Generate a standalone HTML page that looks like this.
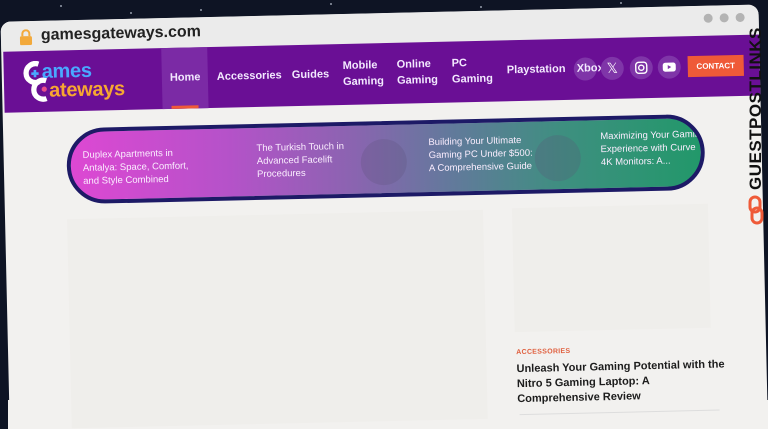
<!DOCTYPE html>
<html><head><meta charset="utf-8"><style>
*{margin:0;padding:0;box-sizing:border-box}
html,body{width:768px;height:429px;overflow:hidden}
body{background:#0e1424;font-family:"Liberation Sans",sans-serif;position:relative}
#clip{position:absolute;left:0;top:0;width:768px;height:429px;overflow:hidden;clip-path:inset(0 0 0 0)}
.star{position:absolute;width:2px;height:2px;background:#cfd6e6;border-radius:50%;opacity:.7}
#win{position:absolute;left:5px;top:13px;width:758px;height:408px;background:#f2f1ef;border-radius:10px 10px 0 0;transform:rotate(-1.3deg);transform-origin:384px 200px;overflow:hidden}
#under{position:absolute;left:8px;top:400px;width:760px;height:29px;background:#f2f1ef}
.bar{position:absolute;left:0;top:0;width:760px;height:30px;background:#ebebeb}
.url{position:absolute;left:40px;top:6px;font-size:16px;font-weight:bold;color:#222}
.lock{position:absolute;left:18px;top:8px;width:14px;height:16px}
.dot{position:absolute;top:8px;width:9px;height:9px;border-radius:50%;background:#b3b3b3}
.hdr{position:absolute;left:2px;top:30px;width:760px;height:61px;background:#6a0f95}
.nav{position:absolute;color:#f3e9ff;font-weight:bold;font-size:11px;line-height:16px}
.ic{position:absolute;top:19px;width:23px;height:23px;border-radius:50%;background:#7f35a8}
.pill{position:absolute;left:63px;top:108px;width:638px;height:76px;border-radius:38px;border:4px solid #1d1a66;background:linear-gradient(90deg,#dd48d3 0%,#b552c9 25%,#8a64b0 45%,#63799c 60%,#3e8f80 78%,#22986a 100%);overflow:hidden}
.pt{position:absolute;color:#fbeeff;font-size:9.5px;line-height:13px}
.circ{position:absolute;top:14px;width:46px;height:46px;border-radius:50%;background:rgba(90,80,120,.25)}
</style></head><body>
<div id="clip">
<div class="star" style="left:60px;top:5px"></div><div class="star" style="left:200px;top:9px"></div><div class="star" style="left:330px;top:3px"></div><div class="star" style="left:480px;top:6px"></div><div class="star" style="left:620px;top:2px"></div><div class="star" style="left:130px;top:12px"></div>
<div id="under"></div>
<div id="win">
 <div class="bar"></div>
 <svg class="lock" viewBox="0 0 14 16"><path d="M3.5 7V4.5a3.5 3.5 0 0 1 7 0V7" stroke="#f2a93b" stroke-width="2" fill="none"/><rect x="1" y="7" width="12" height="9" rx="1.5" fill="#f2a93b"/></svg>
 <div class="url">gamesgateways.com</div>
 <div class="dot" style="left:703px"></div><div class="dot" style="left:719px"></div><div class="dot" style="left:735px"></div>
 <div class="hdr">
  <div style="position:absolute;left:158px;top:0;width:46px;height:61px;background:#7b2aa5"></div>
  <div style="position:absolute;left:167px;top:58px;width:27px;height:3px;background:#ef5a38"></div>
  <svg style="position:absolute;left:19px;top:10px" width="36" height="42" viewBox="0 0 34 40"><path d="M15 3a9 9 0 1 0 0 17" stroke="#fff" stroke-width="5" fill="none"/><path d="M22 19a9 9 0 1 0 0 17" stroke="#fff" stroke-width="5" fill="none"/><path d="M8 12h7M11.5 8.5v7" stroke="#4aa8ff" stroke-width="2.5"/><circle cx="20" cy="27" r="2.5" fill="#e84c8a"/></svg>
  <div style="position:absolute;left:38px;top:10px;font-size:20px;font-weight:bold;color:#4aa8ff;letter-spacing:-.3px">ames</div>
  <div style="position:absolute;left:45px;top:29px;font-size:20px;font-weight:bold;color:#f7a731;letter-spacing:-.3px">ateways</div>
  <div class="nav" style="left:166px;top:22px">Home</div>
  <div class="nav" style="left:213px;top:22px">Accessories</div>
  <div class="nav" style="left:288px;top:22px">Guides</div>
  <div class="nav" style="left:339px;top:14px">Mobile<br>Gaming</div>
  <div class="nav" style="left:393px;top:14px">Online<br>Gaming</div>
  <div class="nav" style="left:448px;top:14px">PC<br>Gaming</div>
  <div class="nav" style="left:503px;top:22px">Playstation</div>
  <div class="ic" style="left:570px"></div>
  <div class="nav" style="left:573px;top:22px">Xbox</div>
  <div class="ic" style="left:597px;color:#fff;font-size:14px;text-align:center;line-height:23px">𝕏</div>
  <div class="ic" style="left:626px"><svg width="23" height="23"><rect x="6" y="6" width="11" height="11" rx="3" stroke="#fff" stroke-width="1.4" fill="none"/><circle cx="11.5" cy="11.5" r="2.6" stroke="#fff" stroke-width="1.4" fill="none"/></svg></div>
  <div class="ic" style="left:654px"><svg width="23" height="23"><rect x="5" y="7" width="13" height="9" rx="2.5" fill="#fff"/><path d="M10 9.5v4l3.5-2z" fill="#7f35a8"/></svg></div>
  <div style="position:absolute;left:684px;top:20px;width:56px;height:21px;background:#ef5a38;color:#fff;font-size:8px;font-weight:bold;text-align:center;line-height:21px">CONTACT</div>
 </div>
 <div class="pill">
  <div class="circ" style="left:290px"></div><div class="circ" style="left:464px"></div>
  <div class="pt" style="left:12px;top:17px">Duplex Apartments in<br>Antalya: Space, Comfort,<br>and Style Combined</div>
  <div class="pt" style="left:186px;top:14px">The Turkish Touch in<br>Advanced Facelift<br>Procedures</div>
  <div class="pt" style="left:358px;top:12px">Building Your Ultimate<br>Gaming PC Under $500:<br>A Comprehensive Guide</div>
  <div class="pt" style="left:530px;top:10px">Maximizing Your Gamir<br>Experience with Curve<br>4K Monitors: A...</div>
 </div>
 <div style="position:absolute;left:62px;top:199px;width:416px;height:220px;background:#efeeeb"></div>
 <div style="position:absolute;left:507px;top:198px;width:196px;height:124px;background:#efeeeb"></div>
 <div style="position:absolute;left:508px;top:339px;font-size:7px;font-weight:bold;color:#e0603f;letter-spacing:.3px">ACCESSORIES</div>
 <div style="position:absolute;left:508px;top:352px;width:210px;font-size:11px;line-height:15px;font-weight:bold;color:#1c1c1c">Unleash Your Gaming Potential with the Nitro 5 Gaming Laptop: A Comprehensive Review</div>
 <div style="position:absolute;left:510px;top:404px;width:200px;height:1px;background:#ddd"></div>
</div>
<div style="position:absolute;left:746px;top:190px;transform:rotate(-90deg);transform-origin:0 0;font-size:17px;font-weight:bold;color:#111;letter-spacing:.5px;white-space:nowrap">GUESTPOSTLINKS</div>
<svg style="position:absolute;left:747px;top:195px" width="18" height="30" viewBox="0 0 18 30"><rect x="3" y="2" width="10" height="15" rx="5" stroke="#ef5a38" stroke-width="3" fill="none"/><rect x="5" y="13" width="10" height="15" rx="5" stroke="#ef5a38" stroke-width="3" fill="none"/></svg>
</div>
</body></html>
